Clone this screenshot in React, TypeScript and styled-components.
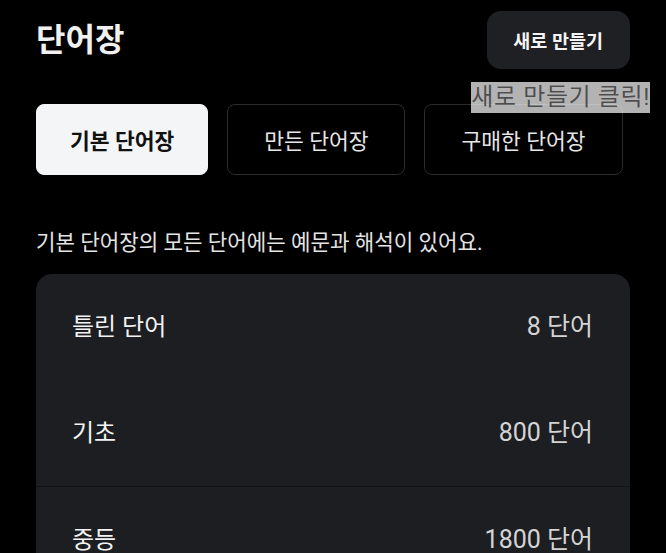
import styled, { createGlobalStyle } from "styled-components";

const GlobalStyle = createGlobalStyle`
  html, body {
    margin: 0;
    padding: 0;
    background: #000;
  }
  body {
    font-family: Roboto, "Noto Sans CJK KR", "Noto Sans", sans-serif;
    color: #f2f2f2;
  }
`;

interface IRow {
  label: string;
  count: number;
  divider?: boolean;
}

const rows: IRow[] = [
  { label: "틀린 단어", count: 8 },
  { label: "기초", count: 800 },
  { label: "중등", count: 1800, divider: true },
  { label: "고등", count: 2400, divider: true },
];

const tabs = ["기본 단어장", "만든 단어장", "구매한 단어장"];

const Page = styled.div`
  height: 553px;
  overflow: hidden;
  padding: 11px 36px 0 36px;
  box-sizing: border-box;
`;

const Header = styled.div`
  display: flex;
  justify-content: space-between;
  align-items: center;
  height: 58px;
`;

const Title = styled.h1`
  margin: 0;
  font-size: 32px;
  font-weight: 700;
  line-height: 1;
  color: #f0f0f0;
`;

const ButtonWrap = styled.div`
  position: relative;
`;

const NewButton = styled.button`
  height: 58px;
  padding: 0 27px 0 26px;
  border: none;
  border-radius: 14px;
  background: #1e2023;
  color: #f4f4f4;
  font-family: inherit;
  font-size: 18.5px;
  font-weight: 700;
`;

const Tooltip = styled.div`
  position: absolute;
  top: 71px;
  right: -20px;
  white-space: nowrap;
  background: rgba(255, 255, 255, 0.7);
  color: rgba(0, 0, 0, 0.58);
  font-size: 24px;
  letter-spacing: 0.6px;
  line-height: 31px;
  z-index: 2;
`;

const Tabs = styled.div`
  display: flex;
  gap: 19px;
  margin-top: 35px;
`;

const Tab = styled.div<{ $active?: boolean }>`
  height: 71px;
  box-sizing: border-box;
  display: flex;
  align-items: center;
  padding: 0 ${(p) => (p.$active ? "33px" : "36px")};
  border-radius: 8px;
  border: 1px solid ${(p) => (p.$active ? "#f4f5f7" : "#2b2c2f")};
  background: ${(p) => (p.$active ? "#f4f5f7" : "transparent")};
  color: ${(p) => (p.$active ? "#111" : "#e6e6e6")};
  font-size: 21.5px;
  font-weight: ${(p) => (p.$active ? 700 : 400)};
  white-space: nowrap;
`;

const Description = styled.p`
  margin: 54px 0 0;
  font-size: 21.2px;
  line-height: 28px;
  color: #e4e4e4;
`;

const Card = styled.div`
  margin-top: 17px;
  background: #1c1e21;
  border-radius: 16px;
`;

const Row = styled.div<{ $divider?: boolean }>`
  display: flex;
  justify-content: space-between;
  align-items: center;
  height: 106px;
  padding: 0 37px 0 36px;
  border-top: ${(p) => (p.$divider ? "1px solid #121315" : "none")};
`;

const Label = styled.span`
  font-size: 24px;
  line-height: 30px;
  margin-top: -1px;
  color: #f2f2f2;
`;

const Count = styled.span`
  font-size: 25px;
  line-height: 30px;
  margin-top: -1px;
  color: #d4d4d4;
`;

const App = () => {
  return (
    <Page>
      <GlobalStyle />
      <Header>
        <Title>단어장</Title>
        <ButtonWrap>
          <NewButton>새로 만들기</NewButton>
          <Tooltip>새로 만들기 클릭!</Tooltip>
        </ButtonWrap>
      </Header>
      <Tabs>
        {tabs.map((tab, i) => (
          <Tab key={i} $active={i === 0}>
            {tab}
          </Tab>
        ))}
      </Tabs>
      <Description>기본 단어장의 모든 단어에는 예문과 해석이 있어요.</Description>
      <Card>
        {rows.map((row, i) => (
          <Row key={i} $divider={row.divider}>
            <Label>{row.label}</Label>
            <Count>{row.count} 단어</Count>
          </Row>
        ))}
      </Card>
    </Page>
  );
};

export default App;
